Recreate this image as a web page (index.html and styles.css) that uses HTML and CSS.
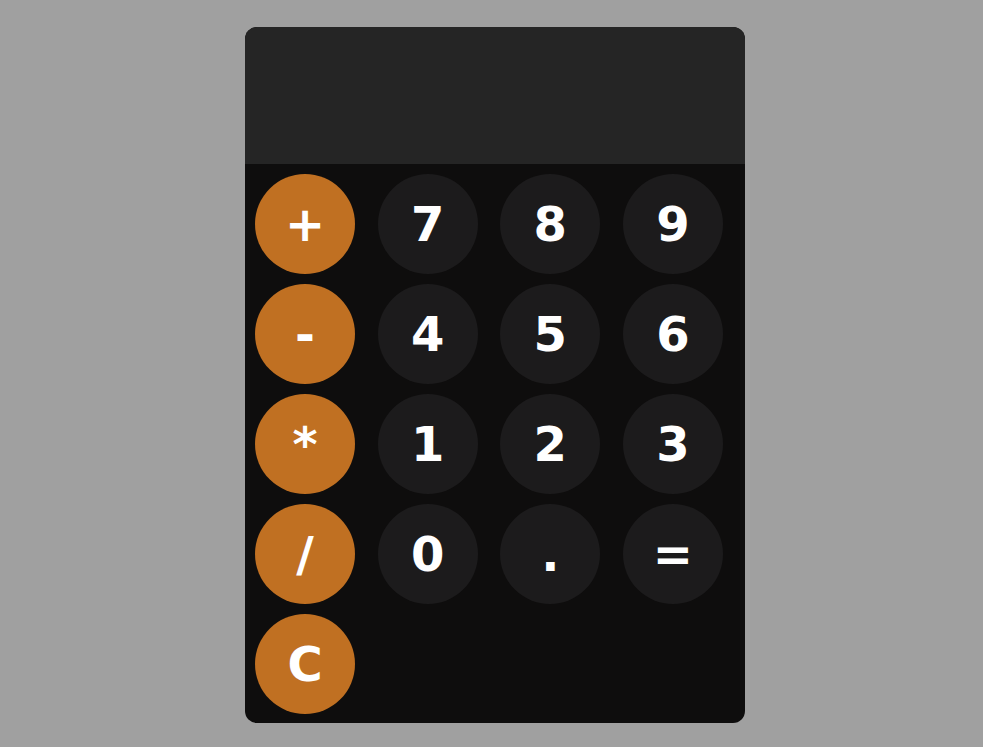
FILE: index.html
```html
<!DOCTYPE html>
<html>
<head>
<meta charset="utf-8">
<link rel="stylesheet" href="styles.css">
</head>
<body>
<div class="calc">
  <div class="display"></div>
  <div class="keys">
    <button class="key op">+</button>
    <button class="key">7</button>
    <button class="key">8</button>
    <button class="key">9</button>
    <button class="key op">-</button>
    <button class="key">4</button>
    <button class="key">5</button>
    <button class="key">6</button>
    <button class="key op">*</button>
    <button class="key">1</button>
    <button class="key">2</button>
    <button class="key">3</button>
    <button class="key op">/</button>
    <button class="key">0</button>
    <button class="key">.</button>
    <button class="key">=</button>
    <button class="key op">C</button>
  </div>
</div>
</body>
</html>
```
FILE: styles.css
```css
html, body {
  margin: 0;
  padding: 0;
  background: #a0a0a0;
  height: 100%;
}
body {
  padding-top: 27px;
  box-sizing: border-box;
}
.calc {
  width: 500px;
  margin-left: 245px;
  background: #0e0d0d;
  border-radius: 12px;
  overflow: hidden;
}
.display {
  height: 137px;
  background: #252525;
}
.keys {
  display: grid;
  grid-template-columns: repeat(4, 100px);
  justify-content: space-between;
  row-gap: 10px;
  padding: 10px 22px 9px 10px;
}
.key {
  width: 100px;
  height: 100px;
  border: none;
  border-radius: 50%;
  background: #1c1b1c;
  color: #ffffff;
  font-family: "DejaVu Sans", Verdana, sans-serif;
  font-weight: bold;
  font-size: 48px;
  display: flex;
  align-items: center;
  justify-content: center;
  padding: 0 0 0 0;
  line-height: 1;
}
.op {
  background: #c07022;
}
```
